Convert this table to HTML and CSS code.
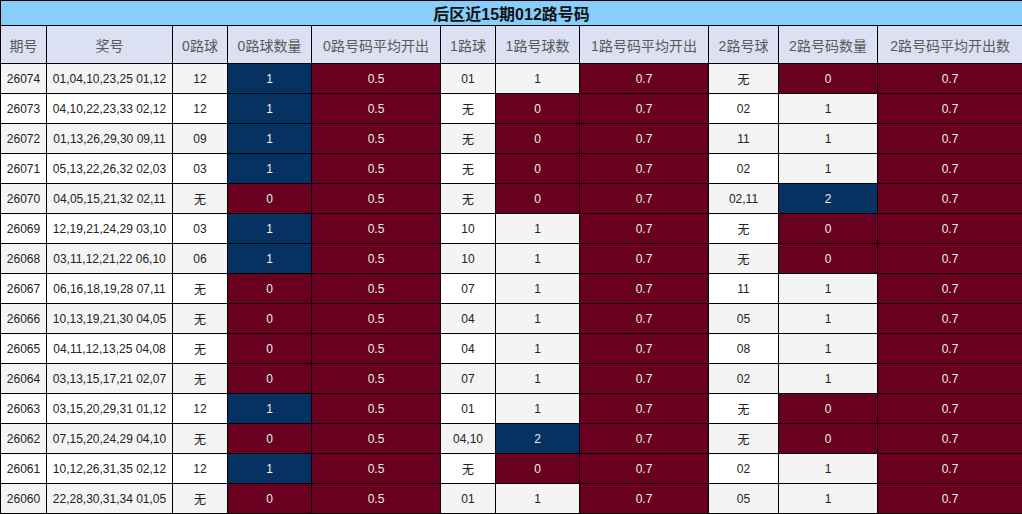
FILE: index.html
```html
<!DOCTYPE html>
<html lang="zh">
<head>
<meta charset="utf-8">
<title>后区近15期012路号码</title>
<link rel="stylesheet" href="styles.css">
</head>
<body>
<table class="grid">
<colgroup>
<col class="c1"><col class="c2"><col class="c3"><col class="c4"><col class="c5"><col class="c6"><col class="c7"><col class="c8"><col class="c9"><col class="c10"><col class="c11">
</colgroup>
<thead>
<tr class="title"><th colspan="11">后区近15期012路号码</th></tr>
<tr class="head">
<th>期号</th><th>奖号</th><th>0路球</th><th>0路球数量</th><th>0路号码平均开出</th><th>1路球</th><th>1路号球数</th><th>1路号码平均开出</th><th>2路号球</th><th>2路号码数量</th><th>2路号码平均开出数</th>
</tr>
</thead>
<tbody>
<tr><td>26074</td><td>01,04,10,23,25 01,12</td><td>12</td><td class="b">1</td><td class="m">0.5</td><td>01</td><td class="l">1</td><td class="m">0.7</td><td>无</td><td class="m">0</td><td class="m">0.7</td></tr>
<tr><td>26073</td><td>04,10,22,23,33 02,12</td><td>12</td><td class="b">1</td><td class="m">0.5</td><td>无</td><td class="m">0</td><td class="m">0.7</td><td>02</td><td class="l">1</td><td class="m">0.7</td></tr>
<tr><td>26072</td><td>01,13,26,29,30 09,11</td><td>09</td><td class="b">1</td><td class="m">0.5</td><td>无</td><td class="m">0</td><td class="m">0.7</td><td>11</td><td class="l">1</td><td class="m">0.7</td></tr>
<tr><td>26071</td><td>05,13,22,26,32 02,03</td><td>03</td><td class="b">1</td><td class="m">0.5</td><td>无</td><td class="m">0</td><td class="m">0.7</td><td>02</td><td class="l">1</td><td class="m">0.7</td></tr>
<tr><td>26070</td><td>04,05,15,21,32 02,11</td><td>无</td><td class="m">0</td><td class="m">0.5</td><td>无</td><td class="m">0</td><td class="m">0.7</td><td>02,11</td><td class="b">2</td><td class="m">0.7</td></tr>
<tr><td>26069</td><td>12,19,21,24,29 03,10</td><td>03</td><td class="b">1</td><td class="m">0.5</td><td>10</td><td class="l">1</td><td class="m">0.7</td><td>无</td><td class="m">0</td><td class="m">0.7</td></tr>
<tr><td>26068</td><td>03,11,12,21,22 06,10</td><td>06</td><td class="b">1</td><td class="m">0.5</td><td>10</td><td class="l">1</td><td class="m">0.7</td><td>无</td><td class="m">0</td><td class="m">0.7</td></tr>
<tr><td>26067</td><td>06,16,18,19,28 07,11</td><td>无</td><td class="m">0</td><td class="m">0.5</td><td>07</td><td class="l">1</td><td class="m">0.7</td><td>11</td><td class="l">1</td><td class="m">0.7</td></tr>
<tr><td>26066</td><td>10,13,19,21,30 04,05</td><td>无</td><td class="m">0</td><td class="m">0.5</td><td>04</td><td class="l">1</td><td class="m">0.7</td><td>05</td><td class="l">1</td><td class="m">0.7</td></tr>
<tr><td>26065</td><td>04,11,12,13,25 04,08</td><td>无</td><td class="m">0</td><td class="m">0.5</td><td>04</td><td class="l">1</td><td class="m">0.7</td><td>08</td><td class="l">1</td><td class="m">0.7</td></tr>
<tr><td>26064</td><td>03,13,15,17,21 02,07</td><td>无</td><td class="m">0</td><td class="m">0.5</td><td>07</td><td class="l">1</td><td class="m">0.7</td><td>02</td><td class="l">1</td><td class="m">0.7</td></tr>
<tr><td>26063</td><td>03,15,20,29,31 01,12</td><td>12</td><td class="b">1</td><td class="m">0.5</td><td>01</td><td class="l">1</td><td class="m">0.7</td><td>无</td><td class="m">0</td><td class="m">0.7</td></tr>
<tr><td>26062</td><td>07,15,20,24,29 04,10</td><td>无</td><td class="m">0</td><td class="m">0.5</td><td>04,10</td><td class="b">2</td><td class="m">0.7</td><td>无</td><td class="m">0</td><td class="m">0.7</td></tr>
<tr><td>26061</td><td>10,12,26,31,35 02,12</td><td>12</td><td class="b">1</td><td class="m">0.5</td><td>无</td><td class="m">0</td><td class="m">0.7</td><td>02</td><td class="l">1</td><td class="m">0.7</td></tr>
<tr><td>26060</td><td>22,28,30,31,34 01,05</td><td>无</td><td class="m">0</td><td class="m">0.5</td><td>01</td><td class="l">1</td><td class="m">0.7</td><td>05</td><td class="l">1</td><td class="m">0.7</td></tr>
</tbody>
</table>
</body>
</html>
```

FILE: styles.css
```css
html, body {
  margin: 0;
  padding: 0;
  background: #ffffff;
}

.grid {
  width: 1022px;
  border-collapse: collapse;
  table-layout: fixed;
  font-family: "Liberation Sans", Arial, "Noto Sans CJK SC", sans-serif;
  font-size: 12px;
  color: #222222;
}

.c1 { width: 46px; }
.c2 { width: 126px; }
.c3 { width: 55px; }
.c4 { width: 84px; }
.c5 { width: 129px; }
.c6 { width: 55px; }
.c7 { width: 84px; }
.c8 { width: 129px; }
.c9 { width: 70px; }
.c10 { width: 99px; }
.c11 { width: 145px; }

.grid th,
.grid td {
  border: 1px solid #000000;
  padding: 0;
  text-align: center;
  vertical-align: middle;
  white-space: nowrap;
  overflow: hidden;
}

.title th {
  height: 24px;
  background: #87cefa;
  color: #111111;
  font-size: 16px;
  font-weight: bold;
}

.head th {
  height: 37px;
  background: #dbe0f2;
  color: #5a5a5a;
  font-size: 14px;
  font-weight: normal;
}

.grid tbody tr {
  height: 30px;
}

.grid tbody tr:nth-child(odd) td {
  background: #f4f4f4;
}

.grid tbody tr:nth-child(even) td {
  background: #ffffff;
}

.grid tbody tr td.l {
  background: #f4f4f4;
}

.grid tbody tr td.b {
  background: #063161;
  color: #eeeeee;
}

.grid tbody tr td.m {
  background: #69001f;
  color: #eeeeee;
}
```
